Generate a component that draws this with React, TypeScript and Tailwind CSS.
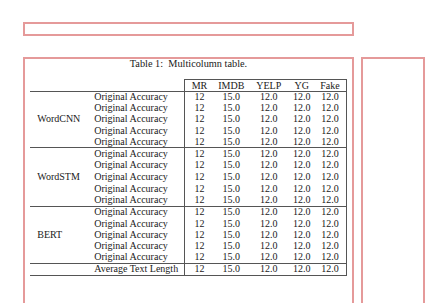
const groups = [
  { name: 'WordCNN', h: 'h-[11.2px]' },
  { name: 'WordSTM', h: 'h-[11.8px]' },
  { name: 'BERT', h: 'h-[11.4px]' },
]
const nums = ['12', '15.0', '12.0', '12.0', '12.0']
const heads = ['MR', 'IMDB', 'YELP', 'YG', 'Fake']

const numCell = (i: number) =>
  i === 0 ? 'border-l border-[#555]' : i === 4 ? 'border-r border-[#555]' : ''

function NumCells() {
  return (
    <>
      {nums.map((n, i) => (
        <td key={i} className={`text-center p-0 ${numCell(i)}`}>
          {n}
        </td>
      ))}
    </>
  )
}

export default function App() {
  return (
    <div
      className="h-[303px] w-[442px] overflow-hidden bg-white pl-[23px] pt-[22px] text-[#1a1a1a]"
      style={{ fontFamily: '"Liberation Serif", "Times New Roman", serif' }}
    >
      <div className="h-[14px] w-[331px] border-2 border-[#e59a9a]" />
      <div className="mt-[21px] flex gap-[7px]">
        <div className="h-[260px] w-[331px] border-2 border-[#e59a9a]">
          <p className="text-center text-[10.3px] leading-[9px]">Table 1:&nbsp; Multicolumn table.</p>
          <table className="mx-auto mt-[11px] border-collapse text-[10px] leading-[10px]">
            <colgroup>
              <col className="w-[58px]" />
              <col className="w-[96px]" />
              <col className="w-[30px]" />
              <col className="w-[34px]" />
              <col className="w-[41px]" />
              <col className="w-[25px]" />
              <col className="w-[32px]" />
            </colgroup>
            <thead>
              <tr className="h-[12px] border-b border-[#555]">
                <th className="p-0" />
                <th className="p-0" />
                {heads.map((h, i) => (
                  <th key={h} className={`p-0 text-center font-normal border-t border-[#555] ${numCell(i)}`}>
                    {h}
                  </th>
                ))}
              </tr>
            </thead>
            <tbody>
              {groups.map((g, gi) =>
                [0, 1, 2, 3, 4].map((r) => (
                  <tr key={g.name + r} className={`${g.h} ${r === 0 && gi > 0 ? 'border-t border-[#555]' : ''}`}>
                    {r === 0 && (
                      <td rowSpan={5} className="p-0 pl-[7px] align-middle">
                        {g.name}
                      </td>
                    )}
                    <td className="p-0 pl-[6px]">Original Accuracy</td>
                    <NumCells />
                  </tr>
                ))
              )}
              <tr className="h-[12px] border-y border-[#555]">
                <td className="p-0" />
                <td className="p-0 pl-[6px]">Average Text Length</td>
                <NumCells />
              </tr>
            </tbody>
          </table>
        </div>
        <div className="h-[260px] w-[64px] border-2 border-[#e59a9a]" />
      </div>
    </div>
  )
}
